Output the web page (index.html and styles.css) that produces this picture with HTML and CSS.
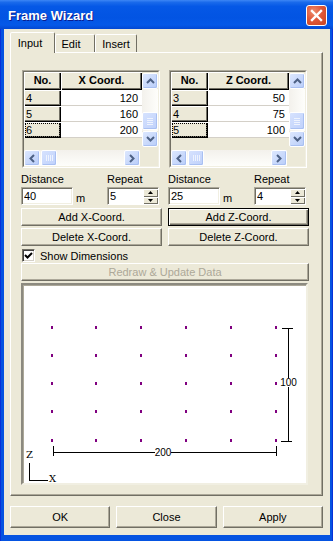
FILE: index.html
```html
<!DOCTYPE html>
<html lang="en">
<head>
    <title>Frame Wizard</title>
    <link rel="stylesheet" href="styles.css">
</head>
<body>
    <div class="window">
        <div class="titlebar">
            <span class="title">Frame Wizard</span>
            <span class="close-btn">
                <svg width="13" height="13" viewBox="0 0 13 13"><path d="M2 2 L11 11 M11 2 L2 11" stroke="#fff" stroke-width="2.4" stroke-linecap="square"/></svg>
            </span>
        </div>
        <div class="frame">
            <div class="tabs">
                <div class="tab active">Input</div>
                <div class="tab tab-edit">Edit</div>
                <div class="tab tab-insert">Insert</div>
            </div>
            <div class="panel">
                <div class="columns">
                    <div class="col">
                        <div class="grid">
                            <div class="grid-body">
                                <div class="grid-main">
                                    <div class="cells">
                                        <div class="row head">
                                            <span class="hcell no">No.</span>
                                            <span class="hcell val">X Coord.</span>
                                        </div>
                                        <div class="row">
                                            <span class="rcell">4</span>
                                            <span class="dcell">120</span>
                                        </div>
                                        <div class="row">
                                            <span class="rcell">5</span>
                                            <span class="dcell">160</span>
                                        </div>
                                        <div class="row">
                                            <span class="rcell focus">6</span>
                                            <span class="dcell">200</span>
                                        </div>
                                    </div>
                                    <div class="vscroll">
                                        <span class="sb-btn"><svg width="9" height="6" viewBox="0 0 9 6"><path d="M1 5 L4.5 1.5 L8 5" stroke="#4d6185" stroke-width="2" fill="none"/></svg></span>
                                        <span class="sb-track"><span class="sb-thumb v"><i></i><i></i><i></i><i></i></span></span>
                                        <span class="sb-btn"><svg width="9" height="6" viewBox="0 0 9 6"><path d="M1 1 L4.5 4.5 L8 1" stroke="#4d6185" stroke-width="2" fill="none"/></svg></span>
                                    </div>
                                </div>
                                <div class="hscroll">
                                    <span class="sb-btn"><svg width="6" height="9" viewBox="0 0 6 9"><path d="M5 1 L1.5 4.5 L5 8" stroke="#4d6185" stroke-width="2" fill="none"/></svg></span>
                                    <span class="sb-thumb h"><i></i><i></i><i></i><i></i></span>
                                    <span class="sb-space"></span>
                                    <span class="sb-btn"><svg width="6" height="9" viewBox="0 0 6 9"><path d="M1 1 L4.5 4.5 L1 8" stroke="#4d6185" stroke-width="2" fill="none"/></svg></span>
                                </div>
                            </div>
                        </div>
                        <div class="field-row labels">
                            <span>Distance</span>
                            <span>Repeat</span>
                        </div>
                        <div class="field-row">
                            <span class="dist"><input class="text" type="text" value="40"> <span class="unit">m</span></span>
                            <span class="spin">
                                <input class="spin-text" type="text" value="5">
                                <span class="spin-btns">
                                    <span class="spin-btn"><svg width="5" height="3" viewBox="0 0 5 3"><path d="M0 3 L2.5 0 L5 3 Z" fill="#000"/></svg></span>
                                    <span class="spin-btn"><svg width="5" height="3" viewBox="0 0 5 3"><path d="M0 0 L2.5 3 L5 0 Z" fill="#000"/></svg></span>
                                </span>
                            </span>
                        </div>
                        <button class="btn small">Add X-Coord.</button>
                        <button class="btn small">Delete X-Coord.</button>
                    </div>
                    <div class="col">
                        <div class="grid">
                            <div class="grid-body">
                                <div class="grid-main">
                                    <div class="cells">
                                        <div class="row head">
                                            <span class="hcell no">No.</span>
                                            <span class="hcell val">Z Coord.</span>
                                        </div>
                                        <div class="row">
                                            <span class="rcell">3</span>
                                            <span class="dcell">50</span>
                                        </div>
                                        <div class="row">
                                            <span class="rcell">4</span>
                                            <span class="dcell">75</span>
                                        </div>
                                        <div class="row">
                                            <span class="rcell focus">5</span>
                                            <span class="dcell">100</span>
                                        </div>
                                    </div>
                                    <div class="vscroll">
                                        <span class="sb-btn"><svg width="9" height="6" viewBox="0 0 9 6"><path d="M1 5 L4.5 1.5 L8 5" stroke="#4d6185" stroke-width="2" fill="none"/></svg></span>
                                        <span class="sb-track"><span class="sb-thumb v"><i></i><i></i><i></i><i></i></span></span>
                                        <span class="sb-btn"><svg width="9" height="6" viewBox="0 0 9 6"><path d="M1 1 L4.5 4.5 L8 1" stroke="#4d6185" stroke-width="2" fill="none"/></svg></span>
                                    </div>
                                </div>
                                <div class="hscroll">
                                    <span class="sb-btn"><svg width="6" height="9" viewBox="0 0 6 9"><path d="M5 1 L1.5 4.5 L5 8" stroke="#4d6185" stroke-width="2" fill="none"/></svg></span>
                                    <span class="sb-thumb h"><i></i><i></i><i></i><i></i></span>
                                    <span class="sb-space"></span>
                                    <span class="sb-btn"><svg width="6" height="9" viewBox="0 0 6 9"><path d="M1 1 L4.5 4.5 L1 8" stroke="#4d6185" stroke-width="2" fill="none"/></svg></span>
                                </div>
                            </div>
                        </div>
                        <div class="field-row labels">
                            <span>Distance</span>
                            <span>Repeat</span>
                        </div>
                        <div class="field-row">
                            <span class="dist"><input class="text" type="text" value="25"> <span class="unit">m</span></span>
                            <span class="spin">
                                <input class="spin-text" type="text" value="4">
                                <span class="spin-btns">
                                    <span class="spin-btn"><svg width="5" height="3" viewBox="0 0 5 3"><path d="M0 3 L2.5 0 L5 3 Z" fill="#000"/></svg></span>
                                    <span class="spin-btn"><svg width="5" height="3" viewBox="0 0 5 3"><path d="M0 0 L2.5 3 L5 0 Z" fill="#000"/></svg></span>
                                </span>
                            </span>
                        </div>
                        <button class="btn small default">Add Z-Coord.</button>
                        <button class="btn small">Delete Z-Coord.</button>
                    </div>
                </div>
                <div class="check">
                    <span class="box"><svg width="9" height="9" viewBox="0 0 9 9"><path d="M1 4 L3.5 6.5 L8 2" stroke="#000" stroke-width="2" fill="none"/></svg></span>
                    <span>Show Dimensions</span>
                </div>
                <button class="btn small wide" disabled>Redraw &amp; Update Data</button>
                <div class="canvas">
                    <svg width="283" height="198" viewBox="0 0 283 198" shape-rendering="crispEdges">
                        <g fill="#800080">
                            <rect x="28" y="41" width="2" height="3"/><rect x="72" y="41" width="2" height="3"/><rect x="117" y="41" width="2" height="3"/><rect x="162" y="41" width="2" height="3"/><rect x="207" y="41" width="2" height="3"/><rect x="252" y="41" width="2" height="3"/>
                            <rect x="28" y="69" width="2" height="3"/><rect x="72" y="69" width="2" height="3"/><rect x="117" y="69" width="2" height="3"/><rect x="162" y="69" width="2" height="3"/><rect x="207" y="69" width="2" height="3"/><rect x="252" y="69" width="2" height="3"/>
                            <rect x="28" y="97" width="2" height="3"/><rect x="72" y="97" width="2" height="3"/><rect x="117" y="97" width="2" height="3"/><rect x="162" y="97" width="2" height="3"/><rect x="207" y="97" width="2" height="3"/><rect x="252" y="97" width="2" height="3"/>
                            <rect x="28" y="125" width="2" height="3"/><rect x="72" y="125" width="2" height="3"/><rect x="117" y="125" width="2" height="3"/><rect x="162" y="125" width="2" height="3"/><rect x="207" y="125" width="2" height="3"/><rect x="252" y="125" width="2" height="3"/>
                            <rect x="28" y="154" width="2" height="3"/><rect x="72" y="154" width="2" height="3"/><rect x="117" y="154" width="2" height="3"/><rect x="162" y="154" width="2" height="3"/><rect x="207" y="154" width="2" height="3"/><rect x="252" y="154" width="2" height="3"/>
                        </g>
                        <g stroke="#000" stroke-width="1" fill="none">
                            <path d="M265.5 43 V157 M259 43.5 H270 M258 156.5 H269"/>
                            <path d="M30 167.5 H254 M30.5 161 V171 M253.5 161 V171"/>
                            <path d="M6.5 178 V196 M6 195.5 H25"/>
                        </g>
                        <rect x="258" y="93" width="15" height="9" fill="#fff"/>
                        <text class="dim" x="265.5" y="101" text-anchor="middle">100</text>
                        <rect x="132" y="163" width="16" height="9" fill="#fff"/>
                        <text class="dim" x="140" y="171" text-anchor="middle">200</text>
                        <text class="axis" x="3" y="173">Z</text>
                        <text class="axis" x="26" y="197">X</text>
                    </svg>
                </div>
            </div>
            <div class="footer">
                <button class="btn">OK</button>
                <button class="btn">Close</button>
                <button class="btn">Apply</button>
            </div>
        </div>
    </div>
</body>
</html>
```

FILE: styles.css
```css
* {
    box-sizing: border-box;
}

body {
    margin: 0;
    font-family: "Liberation Sans", Arial, sans-serif;
    font-size: 11px;
    color: #000;
}

.window {
    width: 333px;
    height: 541px;
    display: flex;
    flex-direction: column;
    background: #0553e1;
    box-shadow: inset 1px 0 #0831d9, inset -1px 0 #0831d9;
    overflow: hidden;
}

.titlebar {
    height: 29px;
    flex: none;
    display: flex;
    align-items: center;
    justify-content: space-between;
    padding: 1px 6px 0 8px;
    background: linear-gradient(#3d87f5 0%, #1a6aeb 8%, #0558e6 22%, #0254e3 60%, #0559e8 86%, #0348d2 100%);
}

.title {
    color: #fff;
    font-weight: bold;
    font-size: 13px;
    text-shadow: 1px 1px #0a1d8f;
}

.close-btn {
    width: 21px;
    height: 21px;
    border: 1px solid #fff;
    border-radius: 3px;
    background: radial-gradient(circle at 35% 30%, #ee8e6e 0%, #e0583a 45%, #c9431f 100%);
    display: flex;
    align-items: center;
    justify-content: center;
}

.frame {
    flex: 1;
    margin: 0 3px 6px 4px;
    background: #ece9d8;
    padding: 3px 7px 0 6px;
    display: flex;
    flex-direction: column;
}

/* tabs */
.tabs {
    display: flex;
    align-items: flex-end;
    height: 20px;
    position: relative;
    z-index: 1;
}

.tab {
    height: 18px;
    padding-top: 3px;
    text-align: center;
    background: #ece9d8;
    border: 1px solid;
    border-bottom: none;
    border-color: #fff #716f64 transparent #fff;
    border-radius: 2px 2px 0 0;
}

.tab.active {
    width: 45px;
    height: 21px;
    margin-bottom: -1px;
    padding: 4px 5px 0 0;
}

.tab-edit {
    width: 40px;
    padding-right: 8px;
}

.tab-insert {
    width: 42px;
}

.panel {
    height: 444px;
    flex: none;
    border: 1px solid;
    border-color: #fff #716f64 #716f64 #fff;
    box-shadow: inset -1px -1px #aca899;
    padding: 17px 13px 0 10px;
}

.columns {
    display: grid;
    grid-template-columns: 141px 141px;
    column-gap: 6px;
}

.col {
    display: flex;
    flex-direction: column;
}

/* grid */
.grid {
    width: 138px;
    height: 98px;
    margin-left: 1px;
    border: 1px solid;
    border-color: #aca899 #fff #fff #aca899;
}

.grid-body {
    height: 100%;
    border: 1px solid;
    border-color: #716f64 #f1efe2 #f1efe2 #716f64;
    display: flex;
    flex-direction: column;
}

.grid-main {
    height: 78px;
    display: flex;
}

.cells {
    width: 118px;
}

.row {
    display: flex;
    height: 16px;
}

.row.head {
    height: 18px;
}

.hcell, .rcell {
    background: #ece9d8;
    box-shadow: inset 1px 1px #fff, inset -1px -1px #000, inset -2px -2px #716f64;
}

.hcell {
    font-weight: bold;
    text-align: center;
    line-height: 17px;
}

.no, .rcell {
    width: 37px;
}

.val, .dcell {
    width: 81px;
}

.rcell {
    padding-left: 2px;
    line-height: 16px;
}

.rcell.focus {
    outline: 1px dotted #000;
    outline-offset: -2px;
}

.dcell {
    background: #fff;
    text-align: right;
    padding-right: 4px;
    line-height: 16px;
    border-bottom: 1px solid #d4d0c8;
}

/* scrollbars */
.vscroll {
    width: 16px;
    margin: 1px 0 3px;
    display: flex;
    flex-direction: column;
}

.sb-btn {
    width: 16px;
    height: 16px;
    flex: none;
    display: flex;
    align-items: center;
    justify-content: center;
    border: 1px solid #fff;
    border-radius: 2px;
    background: linear-gradient(135deg, #dce7fe, #b9cdf9);
    box-shadow: inset -1px -1px #a9c0f2;
}

.sb-track {
    flex: 1;
    display: flex;
    flex-direction: column;
    justify-content: flex-end;
    padding-bottom: 1px;
    background: linear-gradient(90deg, #f3f1ec, #fefefb);
}

.sb-thumb {
    display: flex;
    align-items: center;
    justify-content: center;
    gap: 1px;
    border: 1px solid #fff;
    border-radius: 2px;
    background: linear-gradient(135deg, #d6e2fe, #bfd1fb);
    box-shadow: inset -1px -1px #a9c0f2;
}

.sb-thumb.v {
    height: 18px;
    flex-direction: column;
}

.sb-thumb.v i {
    display: block;
    width: 6px;
    height: 1px;
    background: #eef3fe;
}

.sb-thumb.h {
    width: 16px;
    height: 16px;
    margin-left: 1px;
}

.sb-thumb.h i {
    display: block;
    width: 1px;
    height: 6px;
    background: #eef3fe;
}

.hscroll {
    width: 116px;
    height: 16px;
    margin-top: auto;
    display: flex;
    background: linear-gradient(#f3f1ec, #fefefb);
}

.sb-space {
    flex: 1;
}

/* fields */
.field-row {
    display: grid;
    grid-template-columns: 86px 1fr;
}

.field-row.labels {
    height: 15px;
    margin-top: 4px;
    line-height: 15px;
}

.dist {
    display: flex;
    align-items: center;
}

.text, .spin-text {
    height: 18px;
    padding: 0 2px;
    font: inherit;
    background: #fff;
    border: 1px solid;
    border-color: #aca899 #fff #fff #aca899;
    box-shadow: inset 1px 1px #716f64, inset -1px -1px #f1efe2;
    outline: none;
}

.text {
    width: 52px;
}

.unit {
    margin-left: 3px;
    padding-top: 4px;
}

.spin {
    display: flex;
    height: 18px;
    border: 1px solid;
    border-color: #aca899 #fff #fff #aca899;
    width: 52px;
}

.spin-text {
    width: 35px;
    height: 16px;
    border: none;
    box-shadow: inset 1px 1px #716f64;
}

.spin-btns {
    width: 15px;
    display: flex;
    flex-direction: column;
    background: #ece9d8;
    box-shadow: inset 0 1px #716f64;
    padding-top: 1px;
}

.spin-btn {
    flex: 1;
    display: flex;
    align-items: center;
    justify-content: center;
    box-shadow: inset 1px 1px #fff, inset -1px -1px #716f64;
}

/* buttons */
.btn {
    font: inherit;
    color: #000;
    background: #ece9d8;
    border: 1px solid;
    border-color: #fff #716f64 #716f64 #fff;
    box-shadow: inset -1px -1px #aca899;
    padding: 0;
    height: 22px;
}

.btn.small {
    height: 18px;
    margin-top: 3px;
}

.btn.small + .btn.small {
    margin-top: 2px;
}

.btn.default {
    border-color: #000;
    box-shadow: inset 1px 1px #fff, inset -1px -1px #716f64, inset -2px -2px #aca899;
}

.btn.wide {
    width: 100%;
    margin-top: 1px;
}

.btn:disabled {
    color: #aca899;
}

.check {
    display: flex;
    align-items: center;
    gap: 5px;
    height: 13px;
    margin: 3px 0 0 1px;
}

.box {
    width: 13px;
    height: 13px;
    display: flex;
    align-items: center;
    justify-content: center;
    background: #fff;
    border: 1px solid;
    border-color: #716f64 #fff #fff #716f64;
    box-shadow: inset 1px 1px #404040, inset -1px -1px #d4d0c8;
}

/* drawing */
.canvas {
    width: 287px;
    height: 202px;
    margin-top: 2px;
    background: #fff;
    border: 2px solid;
    border-color: #8c8a80 #f1efe2 #f1efe2 #8c8a80;
    box-shadow: inset 1px 1px #aca899;
}

.canvas svg {
    display: block;
}

.dim {
    font-family: "Liberation Sans", Arial, sans-serif;
    font-size: 10px;
}

.axis {
    font-family: "DejaVu Serif", serif;
    font-size: 10px;
}

.footer {
    display: grid;
    grid-template-columns: repeat(3, 1fr);
    column-gap: 6px;
    margin-top: 10px;
}
```
